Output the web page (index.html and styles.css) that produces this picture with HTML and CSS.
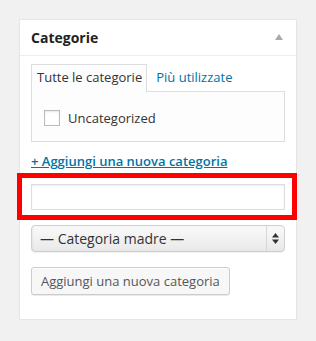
FILE: index.html
```html
<!DOCTYPE html>
<html lang="it">
<head>
    <meta charset="UTF-8">
    <meta name="viewport" content="width=device-width, initial-scale=1.0">
    <title>Categorie</title>
    <link rel="stylesheet" href="styles.css">
</head>
<body>

    <div class="postbox">
        <div class="postbox-header">
            <h3>Categorie</h3>
            <svg class="toggle" width="8" height="6" viewBox="0 0 8 6"><path d="M4 0 L8 6 L0 6 Z" fill="#aaa"/></svg>
        </div>

        <div class="inside">
            <ul class="tabs">
                <li class="tab active">Tutte le categorie</li>
                <li class="tab"><a href="#">Più utilizzate</a></li>
            </ul>

            <div class="tabs-panel">
                <label class="check-row">
                    <span class="checkbox"></span>
                    Uncategorized
                </label>
            </div>

            <a class="add-toggle" href="#">+ Aggiungi una nuova categoria</a>

            <div class="highlight">
                <input type="text" class="new-cat">
            </div>

            <div class="select">
                <span>— Categoria madre —</span>
                <span class="select-arrows">
                    <svg width="7" height="11" viewBox="0 0 7 11">
                        <path d="M3.5 0 L7 4.5 L0 4.5 Z" fill="#333"/>
                        <path d="M0 6.5 L7 6.5 L3.5 11 Z" fill="#333"/>
                    </svg>
                </span>
            </div>

            <button class="button">Aggiungi una nuova categoria</button>
        </div>
    </div>

</body>
</html>
```

FILE: styles.css
```css
body {
    font-family: "Open Sans", "Liberation Sans", sans-serif;
    background-color: #f1f1f1;
    color: #333;
    margin: 0;
    padding: 19px 19px 0 19px;
}

.postbox {
    background: white;
    border: 1px solid #e5e5e5;
    box-shadow: 0 1px 1px rgba(0, 0, 0, 0.04);
    width: 276px;
}

.postbox-header {
    height: 35px;
    border-bottom: 1px solid #eee;
    display: flex;
    align-items: center;
    justify-content: space-between;
    padding: 0 13px 0 11px;
}

.postbox-header h3 {
    margin: 0;
    font-size: 14px;
    font-weight: bold;
    color: #222;
    line-height: 19px;
}

.toggle {
    margin-top: -2px;
}

.inside {
    padding: 8px 11px 24px 11px;
}

.tabs {
    list-style: none;
    margin: 0 0 -1px 0;
    padding: 0;
    display: flex;
    font-size: 13px;
    line-height: 19px;
}

.tab {
    padding: 4px 10px 5px 9px;
}

.tab.active {
    padding: 3px 4px 5px 5px;
    border: 1px solid #ddd;
    border-bottom: none;
    background: #fdfdfd;
    color: #333;
}

.tab a {
    color: #0074a2;
    text-decoration: none;
}

.tabs-panel {
    border: 1px solid #ddd;
    background: #fdfdfd;
    height: 31px;
    padding: 18px 12px 0 12px;
}

.check-row {
    display: flex;
    align-items: center;
    gap: 8px;
    font-size: 13px;
    line-height: 16px;
    color: #333;
}

.checkbox {
    width: 14px;
    height: 14px;
    border: 1px solid #bbb;
    background: #fff;
    box-shadow: inset 0 1px 2px rgba(0, 0, 0, 0.1);
}

.add-toggle {
    display: block;
    margin-top: 10px;
    font-size: 13px;
    font-weight: 600;
    line-height: 19px;
    color: #0074a2;
    text-decoration: underline;
}

.highlight {
    position: relative;
    margin-top: 13px;
}

/* red frame drawn over the field */
.highlight::after {
    content: "";
    position: absolute;
    top: -11px;
    left: -14px;
    right: -12px;
    bottom: -10px;
    border: 5px solid #f00;
    pointer-events: none;
}

.new-cat {
    display: block;
    width: 254px;
    height: 26px;
    box-sizing: border-box;
    margin: 0;
    border: 1px solid #ddd;
    box-shadow: inset 0 1px 2px rgba(0, 0, 0, 0.07);
    background: #fff;
    outline: none;
}

.select {
    margin-top: 15px;
    height: 27px;
    box-sizing: border-box;
    border: 1px solid #d0d0d0;
    border-radius: 4px;
    background: linear-gradient(#fafafa, #e9e9e9);
    box-shadow: 0 1px 1px rgba(0, 0, 0, 0.06), inset 1px 0 2px rgba(0, 0, 0, 0.05);
    display: flex;
    align-items: center;
    justify-content: space-between;
    font-size: 14px;
    color: #333;
    padding-left: 8px;
}

.select-arrows {
    height: 100%;
    width: 17px;
    border-left: 1px solid #d6d6d6;
    display: flex;
    align-items: center;
    justify-content: center;
}

.button {
    display: block;
    margin-top: 15px;
    height: 28px;
    padding: 0 9px;
    font-family: inherit;
    font-size: 13px;
    color: #555;
    background: #f7f7f7;
    border: 1px solid #ccc;
    border-radius: 3px;
    box-shadow: inset 0 1px 0 #fff, 0 1px 0 rgba(0, 0, 0, 0.08);
    cursor: pointer;
}
```
